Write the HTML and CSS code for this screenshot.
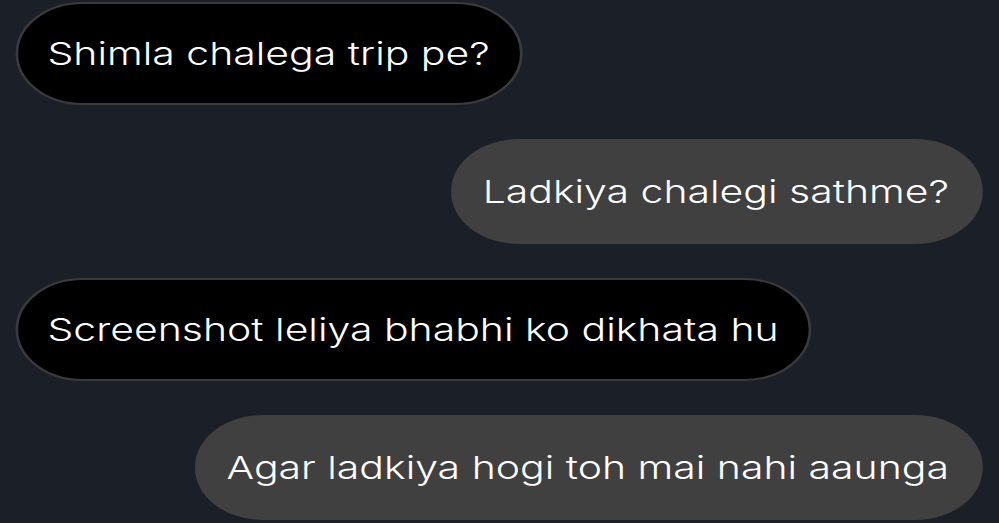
FILE: index.html
```html
<!DOCTYPE html>
<html lang="en">
<head>
  <meta charset="UTF-8">
  <meta name="viewport" content="width=device-width, initial-scale=1.0">
  <title>Chat</title>
  <link rel="stylesheet" href="styles.css">
</head>
<body>
  <!-- Переписка -->
  <main class="chat">
    <div class="msg in">
      <p class="bubble">Shimla chalega trip pe?</p>
    </div>
    <div class="msg out">
      <p class="bubble">Ladkiya chalegi sathme?</p>
    </div>
    <div class="msg in">
      <p class="bubble">Screenshot leliya bhabhi ko dikhata hu</p>
    </div>
    <div class="msg out">
      <p class="bubble">Agar ladkiya hogi toh mai nahi aaunga</p>
    </div>
  </main>
</body>
</html>
```

FILE: styles.css
```css
* {
  margin: 0;
  padding: 0;
  box-sizing: border-box;
}

body {
  font-family: 'Inter', 'Liberation Sans', sans-serif;
  background: #1b1f27;
  color: #fff;
  height: 523px;
  overflow: hidden;
}

/* Переписка: снимок растянут по горизонтали, поэтому масштабируем всю колонку */
.chat {
  width: 768px;
  display: flex;
  flex-direction: column;
  gap: 34px;
  padding: 2px 12px 0 11.5px;
  transform: scaleX(1.3);
  transform-origin: 0 0;
}

.msg {
  display: flex;
}

.msg.in {
  justify-content: flex-start;
}

.msg.out {
  justify-content: flex-end;
}

.bubble {
  height: 103px;
  display: flex;
  align-items: center;
  padding: 0 23px;
  border-radius: 52px;
  font-size: 31.5px;
  font-weight: 350;
  white-space: nowrap;
}

.msg.in .bubble {
  background: #000;
  border: 2px solid #3a3b3e;
}

.msg.out .bubble {
  background: #404040;
  height: 105px;
  padding: 0 26px 0 24px;
}
```
